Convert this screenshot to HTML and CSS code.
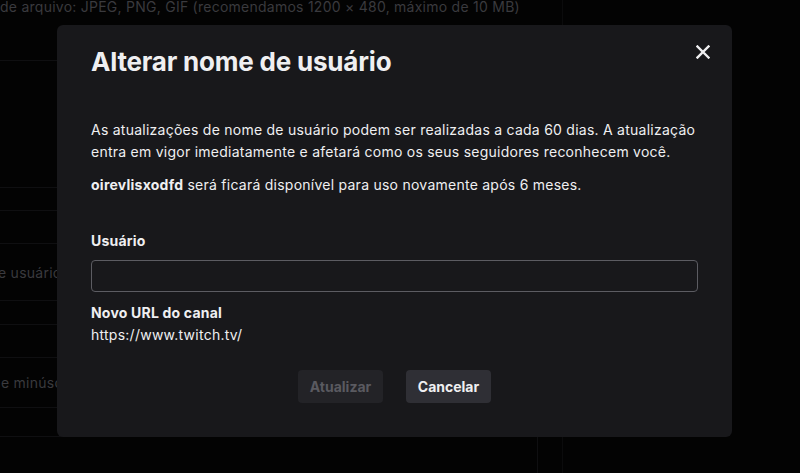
FILE: index.html
```html
<!DOCTYPE html>
<html lang="pt-BR">
<head>
<meta charset="utf-8">
<title>Alterar nome de usuário</title>
<link rel="stylesheet" href="styles.css">
</head>
<body>
<div class="page">
  <div class="main-col">
    <div class="bg-row bg-top"><span class="bg-text">de arquivo: JPEG, PNG, GIF (recomendamos 1200 × 480, máximo de 10 MB)</span></div>
    <div class="bg-row bg-h127"></div>
    <div class="bg-row bg-h23"></div>
    <div class="bg-row bg-h33"></div>
    <div class="bg-row bg-h57"><span class="bg-text">e usuário</span></div>
    <div class="bg-row bg-h24"></div>
    <div class="bg-row bg-h33"></div>
    <div class="bg-row bg-h50"><span class="bg-text">e minúsculas</span></div>
    <div class="bg-row bg-h29"></div>
    <div class="bg-row bg-last"></div>
  </div>
  <div class="side-col"></div>
</div>

<div class="overlay">
  <div class="modal" role="dialog" aria-labelledby="modal-title">
    <button class="close" aria-label="Fechar">
      <svg width="14" height="14" viewBox="0 0 14 14"><path d="M1.5 1.5 L12.5 12.5 M12.5 1.5 L1.5 12.5" stroke="#efeff1" stroke-width="2.4" stroke-linecap="square" fill="none"/></svg>
    </button>
    <h1 id="modal-title" class="title">Alterar nome de usuário</h1>
    <p class="text">As atualizações de nome de usuário podem ser realizadas a cada 60 dias. A atualização entra em vigor imediatamente e afetará como os seus seguidores reconhecem você.</p>
    <p class="text note"><strong>oirevlisxodfd</strong> será ficará disponível para uso novamente após 6 meses.</p>
    <label class="label" for="user">Usuário</label>
    <input id="user" class="input" type="text">
    <div class="label url-label">Novo URL do canal</div>
    <div class="text">https://www.twitch.tv/</div>
    <div class="actions">
      <button class="btn btn-disabled" disabled>Atualizar</button>
      <button class="btn btn-secondary">Cancelar</button>
    </div>
  </div>
</div>
</body>
</html>
```

FILE: styles.css
```css
* { box-sizing: border-box; }
html, body { margin: 0; padding: 0; }
body {
  width: 800px;
  height: 473px;
  overflow: hidden;
  background: #030303;
  font-family: Inter, "Noto Sans", sans-serif;
  color: #efeff1;
  position: relative;
}

/* dimmed background page */
.page {
  display: flex;
  height: 473px;
}
.main-col {
  width: 538px;
  display: flex;
  flex-direction: column;
}
.side-col {
  margin-left: 24px;
  flex: 1;
  border-left: 1px solid #0b0b0c;
}
.bg-row {
  border-bottom: 1px solid #0f0f11;
  display: flex;
  align-items: center;
  flex-shrink: 0;
}
.bg-text {
  font-size: 14px;
  letter-spacing: 0.25px;
  color: #3a3a3e;
  white-space: nowrap;
}
.bg-top { height: 63px; align-items: flex-start; margin-top: -2px; }
.bg-h127 { height: 127px; }
.bg-h23 { height: 23px; }
.bg-h33 { height: 33px; }
.bg-h57 { height: 57px; }
.bg-h24 { height: 24px; }
.bg-h50 { height: 50px; }
.bg-h29 { height: 29px; }
.bg-last { height: 40px; border-right: 1px solid #0f0f11; }
.bg-h57 .bg-text { margin-left: -2px; }
.bg-h50 .bg-text { margin-left: 1px; }

/* modal */
.overlay {
  position: absolute;
  inset: 0;
}
.modal {
  position: absolute;
  left: 57px;
  top: 25px;
  width: 675px;
  height: 412px;
  background: #18181b;
  border-radius: 6px;
  padding: 19px 34px 34px;
  display: flex;
  flex-direction: column;
}
.close {
  position: absolute;
  right: 22px;
  top: 20px;
  width: 14px;
  height: 14px;
  padding: 0;
  border: 0;
  background: none;
  display: flex;
}
.title {
  margin: 0 0 39px;
  font-size: 26px;
  line-height: 36px;
  font-weight: 700;
  letter-spacing: -0.2px;
  color: #efeff1;
}
.text {
  margin: 0;
  font-size: 14px;
  line-height: 22px;
  letter-spacing: 0.25px;
  color: #efeff1;
}
.note { margin-top: 11px; }
.note strong { font-weight: 700; }
.label {
  margin-top: 34px;
  font-size: 14px;
  line-height: 22px;
  font-weight: 700;
  letter-spacing: 0.2px;
  color: #efeff1;
}
.url-label { margin-top: 10px; }
.input {
  margin-top: 8px;
  width: 607px;
  height: 32px;
  border: 1px solid #5c5c62;
  border-radius: 4px;
  background: #18181b;
  color: #efeff1;
  font: 14px Inter, sans-serif;
  padding: 0 10px;
  outline: none;
}
.actions {
  margin-top: 24px;
  display: flex;
  justify-content: center;
  gap: 23px;
}
.btn {
  height: 33px;
  width: 85px;
  border: 0;
  border-radius: 4px;
  font-family: Inter, sans-serif;
  font-size: 14px;
  font-weight: 700;
  padding: 0;
}
.btn-disabled {
  background: #232327;
  color: #5a5a60;
}
.btn-secondary {
  background: #2f2f35;
  color: #efeff1;
}
```
